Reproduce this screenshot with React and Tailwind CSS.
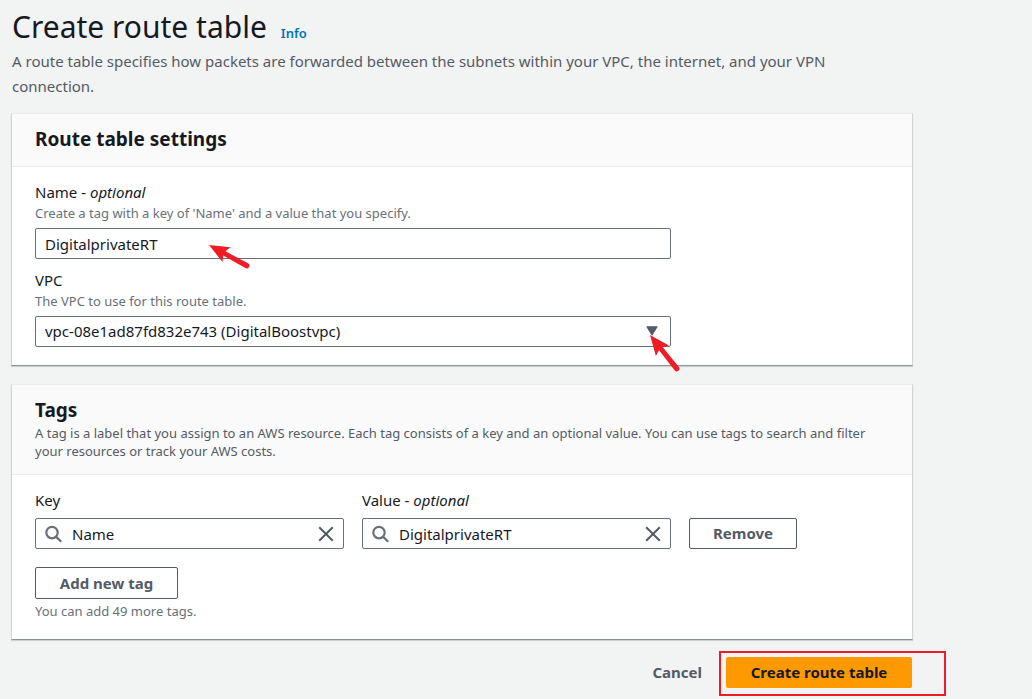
import { useState } from "react";

function Panel({ title, description, children }) {
  return (
    <section className="bg-white border border-t-[#eaeded] border-x-[#d0d6d7] border-b-[#879596] shadow-[0_1px_1px_0_rgba(0,28,36,0.15)]">
      <header className="border-b border-[#eaeded] bg-[#fafafa] px-[23px] pt-3 pb-[14px]">
        <h2 className="text-[19px] leading-[26px] font-bold">{title}</h2>
        {description && (
          <p className="mt-px text-[13px] leading-[18px] text-[#545b64]">{description}</p>
        )}
      </header>
      <div className="px-[23px] pt-[14px] pb-[18px]">{children}</div>
    </section>
  );
}

function Label({ htmlFor, optional, children }) {
  return (
    <label htmlFor={htmlFor} className="block text-[15px] leading-[22px]">
      {children}
      {optional && (
        <>
          {" - "}
          <i>optional</i>
        </>
      )}
    </label>
  );
}

function Hint({ id, children }) {
  return (
    <p id={id} className="text-[13px] leading-[20px] text-[#687078]">
      {children}
    </p>
  );
}

function Arrow({ className, x, y }) {
  const angle = (Math.atan2(y, x) * 180) / Math.PI;
  return (
    <svg
      className={className}
      width="60"
      height="60"
      viewBox="-10 -10 60 60"
      aria-hidden="true"
    >
      <g transform={`rotate(${angle})`} fill="#ee1c25">
        <path d="M0 0 L20 -8.4 L17.5 -2.4 L43 -2.7 A2.7 2.7 0 0 1 43 2.7 L17.5 2.4 L20 8.4 Z" />
      </g>
    </svg>
  );
}

function SearchField({ id, label, optional, initial }) {
  const [value, setValue] = useState(initial);
  return (
    <div className="min-w-0 max-w-[309px] flex-1">
      <Label htmlFor={id} optional={optional}>
        {label}
      </Label>
      <div className="mt-[7px] flex h-[31px] items-center rounded-[2px] border border-[#687078] px-[9px]">
        <svg width="18" height="18" viewBox="0 0 18 18" fill="none" stroke="#687078" strokeWidth="2.2" className="shrink-0" aria-hidden="true">
          <circle cx="7" cy="7.6" r="5.7" />
          <path d="M11 11.6 L16.2 16.8" />
        </svg>
        <input
          id={id}
          value={value}
          onChange={(e) => setValue(e.target.value)}
          className="ml-[9px] min-w-0 flex-1 bg-transparent text-[15px] leading-[22px] outline-none"
        />
        <button type="button" aria-label={`Clear ${label}`} onClick={() => setValue("")} className="shrink-0">
          <svg width="16" height="16" viewBox="0 0 16 16" fill="none" stroke="#545b64" strokeWidth="2" aria-hidden="true">
            <path d="M1.2 1.2 L14.8 14.8 M14.8 1.2 L1.2 14.8" />
          </svg>
        </button>
      </div>
    </div>
  );
}

export default function App() {
  const [name, setName] = useState("DigitalprivateRT");
  return (
    <main className="min-h-screen bg-[#f2f3f3] pt-2 pr-3 pl-[11px] font-['Noto_Sans',sans-serif] text-[#16191f]">
      <form className="max-w-[902px]" onSubmit={(e) => e.preventDefault()}>
        <div className="pr-8 pl-px">
          <div className="flex items-baseline gap-[14px]">
            <h1 className="text-[30px] leading-[38px]">Create route table</h1>
            <a href="#info" className="text-[13px] font-semibold text-[#0073bb]">
              Info
            </a>
          </div>
          <p className="mt-[3px] text-[15px] leading-[25px] text-[#545b64]">
            A route table specifies how packets are forwarded between the subnets within your VPC, the internet, and your VPN connection.
          </p>
        </div>

        <div className="mt-[14px] flex flex-col gap-[18px]">
          <Panel title="Route table settings">
            <div className="flex max-w-[636px] flex-col gap-[10px]">
              <div className="relative">
                <Label htmlFor="name" optional>
                  Name
                </Label>
                <Hint id="name-hint">Create a tag with a key of 'Name' and a value that you specify.</Hint>
                <input
                  id="name"
                  aria-describedby="name-hint"
                  value={name}
                  onChange={(e) => setName(e.target.value)}
                  className="mt-[5px] block h-[31px] w-full rounded-[2px] border border-[#687078] px-[9px] text-[15px] outline-none"
                />
                <Arrow x={40} y={22} className="pointer-events-none absolute top-[54px] left-[164px]" />
              </div>
              <div className="relative">
                <Label htmlFor="vpc">VPC</Label>
                <Hint id="vpc-hint">The VPC to use for this route table.</Hint>
                <div className="relative mt-[5px]">
                  <select
                    id="vpc"
                    aria-describedby="vpc-hint"
                    className="block h-[31px] w-full appearance-none rounded-[2px] border border-[#687078] bg-white px-[9px] text-[15px] outline-none"
                  >
                    <option>vpc-08e1ad87fd832e743 (DigitalBoostvpc)</option>
                  </select>
                  <svg className="pointer-events-none absolute top-[10px] right-[13px]" width="12" height="10" viewBox="0 0 12 10" aria-hidden="true">
                    <path d="M0.8 0.8 H11.2 L6 9.2 Z" fill="#545b64" stroke="#545b64" strokeLinejoin="round" />
                  </svg>
                </div>
                <Arrow x={27} y={34} className="pointer-events-none absolute top-[56px] -right-[29px]" />
              </div>
            </div>
          </Panel>

          <Panel
            title="Tags"
            description="A tag is a label that you assign to an AWS resource. Each tag consists of a key and an optional value. You can use tags to search and filter your resources or track your AWS costs."
          >
            <div className="flex items-end gap-[18px]">
              <SearchField id="tag-key" label="Key" initial="Name" />
              <SearchField id="tag-value" label="Value" optional initial="DigitalprivateRT" />
              <button type="button" className="h-[31px] w-[108px] rounded-[2px] border border-[#545b64] bg-white text-[15px] font-bold text-[#545b64]">
                Remove
              </button>
            </div>
            <button type="button" className="mt-[18px] block h-8 w-[143px] rounded-[2px] border border-[#545b64] bg-white text-[15px] font-bold text-[#545b64]">
              Add new tag
            </button>
            <div className="mt-[2px]">
              <Hint>You can add 49 more tags.</Hint>
            </div>
          </Panel>
        </div>

        <div className="mt-[17px] flex items-center justify-end gap-6 pr-px pb-[10px]">
          <button type="button" className="text-[15px] font-bold text-[#545b64]">
            Cancel
          </button>
          <div className="relative">
            <button type="submit" className="block h-[31px] w-[186px] rounded-[2px] bg-[#ff9900] text-[15px] font-bold text-[#16191f]">
              Create route table
            </button>
            <div className="pointer-events-none absolute -top-[6px] -right-[34px] -bottom-2 -left-[7px] border-2 border-[#ee1c25]" />
          </div>
        </div>
      </form>
    </main>
  );
}
